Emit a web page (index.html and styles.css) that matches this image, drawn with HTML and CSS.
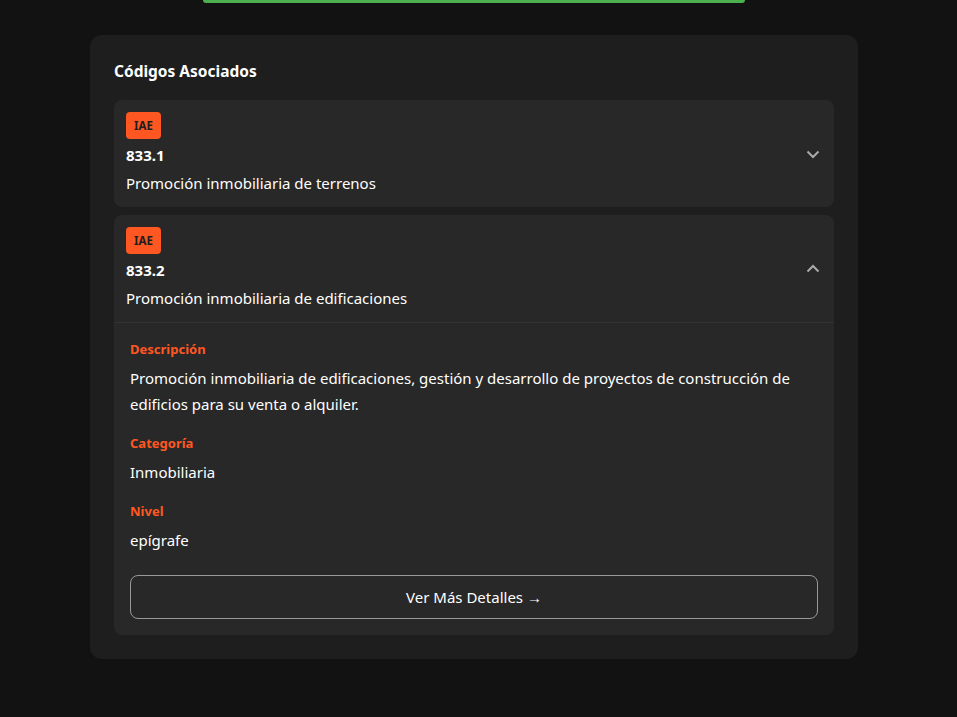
FILE: index.html
```html
<!DOCTYPE html>
<html lang="es">
<head>
    <meta charset="UTF-8">
    <meta name="viewport" content="width=device-width, initial-scale=1.0">
    <title>Códigos Asociados</title>
    <link rel="stylesheet" href="styles.css">
</head>
<body>
    <div class="top-action">
        <div class="green-btn"></div>
    </div>

    <section class="codes-card">
        <h3 class="codes-title">Códigos Asociados</h3>

        <div class="code-item">
            <div class="code-header">
                <div class="code-info">
                    <span class="badge">IAE</span>
                    <div class="code-number">833.1</div>
                    <div class="code-name">Promoción inmobiliaria de terrenos</div>
                </div>
                <svg class="chevron" width="16" height="16" viewBox="0 0 16 16">
                    <path d="M2.5 5.5 L8 11 L13.5 5.5" fill="none" stroke="currentColor" stroke-width="2"/>
                </svg>
            </div>
        </div>

        <div class="code-item open">
            <div class="code-header">
                <div class="code-info">
                    <span class="badge">IAE</span>
                    <div class="code-number">833.2</div>
                    <div class="code-name">Promoción inmobiliaria de edificaciones</div>
                </div>
                <svg class="chevron" width="16" height="16" viewBox="0 0 16 16">
                    <path d="M2.5 10.5 L8 5 L13.5 10.5" fill="none" stroke="currentColor" stroke-width="2"/>
                </svg>
            </div>
            <div class="code-details">
                <div class="field">
                    <div class="field-label">Descripción</div>
                    <p class="field-value">Promoción inmobiliaria de edificaciones, gestión y desarrollo de proyectos de construcción de edificios para su venta o alquiler.</p>
                </div>
                <div class="field">
                    <div class="field-label">Categoría</div>
                    <p class="field-value">Inmobiliaria</p>
                </div>
                <div class="field">
                    <div class="field-label">Nivel</div>
                    <p class="field-value">epígrafe</p>
                </div>
                <button type="button" class="details-btn">Ver Más Detalles →</button>
            </div>
        </div>
    </section>
</body>
</html>
```

FILE: styles.css
```css
body {
    font-family: "Noto Sans", "Open Sans", sans-serif;
    margin: 0;
    padding: 0;
    background-color: #121212;
    color: #ffffff;
}

.top-action {
    padding-left: 203px;
}

.green-btn {
    width: 542px;
    height: 3px;
    background-color: #4caf50;
    border-radius: 0 0 6px 6px;
}

.codes-card {
    width: 720px;
    margin: 32px 0 0 90px;
    padding: 24px;
    background-color: #1e1e1e;
    border-radius: 12px;
}

.codes-title {
    margin: 0 0 17px;
    font-size: 15.5px;
    line-height: 24px;
    font-weight: 700;
}

.code-item {
    background-color: #282828;
    border-radius: 8px;
    margin-bottom: 8px;
}

.code-item:last-child {
    margin-bottom: 0;
}

.code-header {
    display: flex;
    align-items: center;
    justify-content: space-between;
    padding: 12px;
}

.badge {
    display: inline-block;
    background-color: #ff5722;
    color: #1e1e1e;
    font-size: 11.5px;
    font-weight: 700;
    line-height: 19px;
    padding: 4px 8px;
    border-radius: 4px;
    margin-bottom: 4px;
}

.code-number {
    font-size: 15px;
    font-weight: 700;
    line-height: 24px;
}

.code-name {
    font-size: 15px;
    line-height: 24px;
    margin-top: 4px;
}

.chevron {
    color: #aaaaaa;
    flex-shrink: 0;
    margin-right: 1px;
}

.code-details {
    border-top: 1px solid #333333;
    padding: 16px;
}

.field {
    margin-bottom: 16px;
}

.field-label {
    color: #ff5722;
    font-size: 13px;
    font-weight: 700;
    line-height: 21px;
    margin-bottom: 5px;
}

.field-value {
    margin: 0;
    font-size: 15px;
    line-height: 26px;
}

.details-btn {
    display: block;
    width: 100%;
    height: 44px;
    margin-top: 22px;
    background: transparent;
    color: #ffffff;
    border: 1px solid #999999;
    border-radius: 8px;
    font-family: inherit;
    font-size: 15px;
    cursor: pointer;
}

.details-btn:hover {
    background-color: #333333;
}
```
